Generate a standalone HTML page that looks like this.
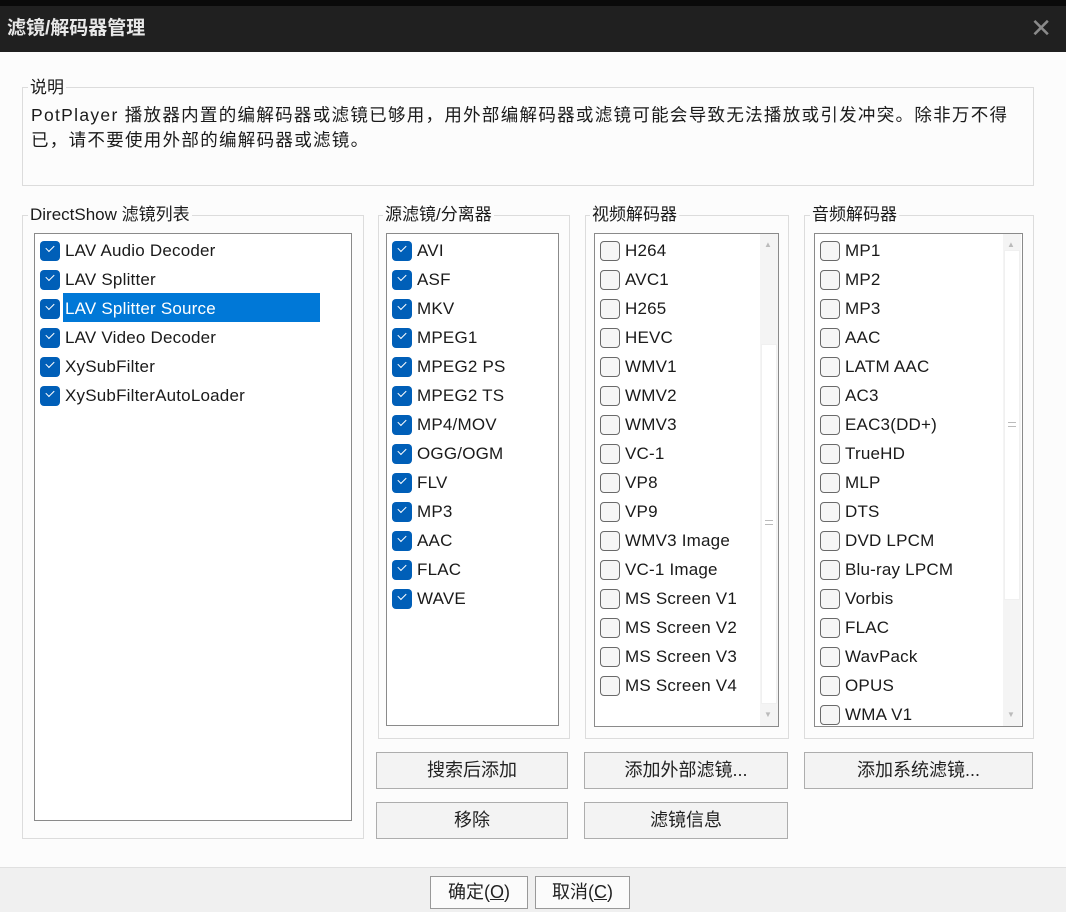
<!DOCTYPE html>
<html><head><meta charset="utf-8"><style>
*{box-sizing:border-box;margin:0;padding:0}
body{width:1066px;height:912px;background:#fcfcfc;font-family:"Liberation Sans","Noto Sans CJK SC",sans-serif;color:#1a1a1a;position:relative;overflow:hidden}
.a{position:absolute}
#top{left:0;top:0;width:1066px;height:6px;background:#0a0a0a}
#tb{left:0;top:6px;width:1066px;height:46px;background:#202020;color:#e8e8e8;font-size:19px;font-weight:bold;line-height:46px;padding-left:7px}
#x{right:14px;top:2px;color:#8a8a8a;font-size:26px;line-height:40px;font-weight:normal}
.grp{position:absolute;border:1px solid #dcdcdc}
.lbl{position:absolute;background:#fcfcfc;font-size:17px;padding:0 2px;line-height:20px}
.lb{position:absolute;border:1px solid #8a8a8a;background:#fff}
.it{position:absolute;height:29px;font-size:17px;line-height:29px;white-space:nowrap;letter-spacing:0.2px}
.cb{position:absolute;width:20px;height:20px;border-radius:4px;top:5px}
.on{background:#005fb8}
.on::after{content:"";position:absolute;left:6px;top:4px;width:7px;height:4px;border-left:1.5px solid #fff;border-bottom:1.5px solid #fff;transform:rotate(-45deg)}
.off{border:1px solid #6a6a6a;background:#f6f6f6}
.sb{position:absolute;background:#f4f4f4;width:18px}
.th{position:absolute;left:1px;width:16px;background:#fff;border:1px solid #e4e4e4}
.btn{position:absolute;height:37px;border:1px solid #adadad;background:#f3f3f3;font-size:18px;text-align:center;line-height:35px;color:#222}
</style></head><body>
<div id="top" class="a"></div>
<div id="tb" class="a">滤镜/解码器管理<span id="x" class="a">✕</span></div>

<div class="grp" style="left:22px;top:87px;width:1012px;height:99px"></div>
<div class="lbl" style="left:28px;top:78px">说明</div>
<div class="a" style="left:31px;top:103px;width:1000px;font-size:17.5px;line-height:25px;white-space:nowrap;letter-spacing:1.3px">PotPlayer 播放器内置的编解码器或滤镜已够用，用外部编解码器或滤镜可能会导致无法播放或引发冲突。除非万不得<br>已，请不要使用外部的编解码器或滤镜。</div>

<div class="grp" style="left:22px;top:215px;width:342px;height:624px"></div>
<div class="lbl" style="left:28px;top:205px">DirectShow 滤镜列表</div>
<div class="lb" style="left:34px;top:233px;width:318px;height:588px"></div>
<div class="a" style="left:63px;top:293px;width:257px;height:29px;background:#0078d7"></div>
<div class="it" style="left:40px;top:236px"><span class="cb on"></span><span style="margin-left:25px">LAV Audio Decoder</span></div>
<div class="it" style="left:40px;top:265px"><span class="cb on"></span><span style="margin-left:25px">LAV Splitter</span></div>
<div class="it" style="left:40px;top:294px;color:#fff"><span class="cb on"></span><span style="margin-left:25px">LAV Splitter Source</span></div>
<div class="it" style="left:40px;top:323px"><span class="cb on"></span><span style="margin-left:25px">LAV Video Decoder</span></div>
<div class="it" style="left:40px;top:352px"><span class="cb on"></span><span style="margin-left:25px">XySubFilter</span></div>
<div class="it" style="left:40px;top:381px"><span class="cb on"></span><span style="margin-left:25px">XySubFilterAutoLoader</span></div>

<div class="grp" style="left:378px;top:215px;width:192px;height:524px"></div>
<div class="lbl" style="left:383px;top:205px">源滤镜/分离器</div>
<div class="lb" style="left:386px;top:233px;width:173px;height:493px"></div>
<div class="it" style="left:392px;top:236px"><span class="cb on"></span><span style="margin-left:25px">AVI</span></div>
<div class="it" style="left:392px;top:265px"><span class="cb on"></span><span style="margin-left:25px">ASF</span></div>
<div class="it" style="left:392px;top:294px"><span class="cb on"></span><span style="margin-left:25px">MKV</span></div>
<div class="it" style="left:392px;top:323px"><span class="cb on"></span><span style="margin-left:25px">MPEG1</span></div>
<div class="it" style="left:392px;top:352px"><span class="cb on"></span><span style="margin-left:25px">MPEG2 PS</span></div>
<div class="it" style="left:392px;top:381px"><span class="cb on"></span><span style="margin-left:25px">MPEG2 TS</span></div>
<div class="it" style="left:392px;top:410px"><span class="cb on"></span><span style="margin-left:25px">MP4/MOV</span></div>
<div class="it" style="left:392px;top:439px"><span class="cb on"></span><span style="margin-left:25px">OGG/OGM</span></div>
<div class="it" style="left:392px;top:468px"><span class="cb on"></span><span style="margin-left:25px">FLV</span></div>
<div class="it" style="left:392px;top:497px"><span class="cb on"></span><span style="margin-left:25px">MP3</span></div>
<div class="it" style="left:392px;top:526px"><span class="cb on"></span><span style="margin-left:25px">AAC</span></div>
<div class="it" style="left:392px;top:555px"><span class="cb on"></span><span style="margin-left:25px">FLAC</span></div>
<div class="it" style="left:392px;top:584px"><span class="cb on"></span><span style="margin-left:25px">WAVE</span></div>

<div class="grp" style="left:585px;top:215px;width:204px;height:524px"></div>
<div class="lbl" style="left:590px;top:205px">视频解码器</div>
<div class="lb" style="left:594px;top:233px;width:185px;height:494px"></div>
<div class="sb" style="left:760px;top:234px;height:492px"><div class="th" style="top:110px;height:360px;border-color:#f0f0f0"></div><div class="a" style="left:4px;top:6px;font-size:8px;color:#bbb">▲</div><div class="a" style="left:4px;top:476px;font-size:8px;color:#bbb">▼</div><div class="a" style="left:5px;top:286px;width:8px;height:5px;border-top:1px solid #bbb;border-bottom:1px solid #bbb"></div></div>
<div class="it" style="left:600px;top:236px"><span class="cb off"></span><span style="margin-left:25px">H264</span></div>
<div class="it" style="left:600px;top:265px"><span class="cb off"></span><span style="margin-left:25px">AVC1</span></div>
<div class="it" style="left:600px;top:294px"><span class="cb off"></span><span style="margin-left:25px">H265</span></div>
<div class="it" style="left:600px;top:323px"><span class="cb off"></span><span style="margin-left:25px">HEVC</span></div>
<div class="it" style="left:600px;top:352px"><span class="cb off"></span><span style="margin-left:25px">WMV1</span></div>
<div class="it" style="left:600px;top:381px"><span class="cb off"></span><span style="margin-left:25px">WMV2</span></div>
<div class="it" style="left:600px;top:410px"><span class="cb off"></span><span style="margin-left:25px">WMV3</span></div>
<div class="it" style="left:600px;top:439px"><span class="cb off"></span><span style="margin-left:25px">VC-1</span></div>
<div class="it" style="left:600px;top:468px"><span class="cb off"></span><span style="margin-left:25px">VP8</span></div>
<div class="it" style="left:600px;top:497px"><span class="cb off"></span><span style="margin-left:25px">VP9</span></div>
<div class="it" style="left:600px;top:526px"><span class="cb off"></span><span style="margin-left:25px">WMV3 Image</span></div>
<div class="it" style="left:600px;top:555px"><span class="cb off"></span><span style="margin-left:25px">VC-1 Image</span></div>
<div class="it" style="left:600px;top:584px"><span class="cb off"></span><span style="margin-left:25px">MS Screen V1</span></div>
<div class="it" style="left:600px;top:613px"><span class="cb off"></span><span style="margin-left:25px">MS Screen V2</span></div>
<div class="it" style="left:600px;top:642px"><span class="cb off"></span><span style="margin-left:25px">MS Screen V3</span></div>
<div class="it" style="left:600px;top:671px"><span class="cb off"></span><span style="margin-left:25px">MS Screen V4</span></div>

<div class="grp" style="left:804px;top:215px;width:230px;height:524px"></div>
<div class="lbl" style="left:810px;top:205px">音频解码器</div>
<div class="lb" style="left:814px;top:233px;width:209px;height:494px"></div>
<div class="sb" style="left:1003px;top:234px;height:492px"><div class="th" style="top:16px;height:350px;border-color:#f0f0f0"></div><div class="a" style="left:4px;top:6px;font-size:8px;color:#bbb">▲</div><div class="a" style="left:4px;top:476px;font-size:8px;color:#bbb">▼</div><div class="a" style="left:5px;top:188px;width:8px;height:5px;border-top:1px solid #bbb;border-bottom:1px solid #bbb"></div></div>
<div class="it" style="left:820px;top:236px"><span class="cb off"></span><span style="margin-left:25px">MP1</span></div>
<div class="it" style="left:820px;top:265px"><span class="cb off"></span><span style="margin-left:25px">MP2</span></div>
<div class="it" style="left:820px;top:294px"><span class="cb off"></span><span style="margin-left:25px">MP3</span></div>
<div class="it" style="left:820px;top:323px"><span class="cb off"></span><span style="margin-left:25px">AAC</span></div>
<div class="it" style="left:820px;top:352px"><span class="cb off"></span><span style="margin-left:25px">LATM AAC</span></div>
<div class="it" style="left:820px;top:381px"><span class="cb off"></span><span style="margin-left:25px">AC3</span></div>
<div class="it" style="left:820px;top:410px"><span class="cb off"></span><span style="margin-left:25px">EAC3(DD+)</span></div>
<div class="it" style="left:820px;top:439px"><span class="cb off"></span><span style="margin-left:25px">TrueHD</span></div>
<div class="it" style="left:820px;top:468px"><span class="cb off"></span><span style="margin-left:25px">MLP</span></div>
<div class="it" style="left:820px;top:497px"><span class="cb off"></span><span style="margin-left:25px">DTS</span></div>
<div class="it" style="left:820px;top:526px"><span class="cb off"></span><span style="margin-left:25px">DVD LPCM</span></div>
<div class="it" style="left:820px;top:555px"><span class="cb off"></span><span style="margin-left:25px">Blu-ray LPCM</span></div>
<div class="it" style="left:820px;top:584px"><span class="cb off"></span><span style="margin-left:25px">Vorbis</span></div>
<div class="it" style="left:820px;top:613px"><span class="cb off"></span><span style="margin-left:25px">FLAC</span></div>
<div class="it" style="left:820px;top:642px"><span class="cb off"></span><span style="margin-left:25px">WavPack</span></div>
<div class="it" style="left:820px;top:671px"><span class="cb off"></span><span style="margin-left:25px">OPUS</span></div>
<div class="it" style="left:820px;top:700px"><span class="cb off"></span><span style="margin-left:25px">WMA V1</span></div>

<div class="btn" style="left:376px;top:752px;width:192px">搜索后添加</div>
<div class="btn" style="left:584px;top:752px;width:204px">添加外部滤镜...</div>
<div class="btn" style="left:804px;top:752px;width:229px">添加系统滤镜...</div>
<div class="btn" style="left:376px;top:802px;width:192px">移除</div>
<div class="btn" style="left:584px;top:802px;width:204px">滤镜信息</div>

<div class="a" style="left:0;top:867px;width:1066px;height:45px;background:#f0f0f0;border-top:1px solid #e0e0e0"></div>
<div class="btn" style="left:430px;top:876px;width:98px;height:33px;line-height:31px;background:#fbfbfb;border-color:#999">确定(<u>O</u>)</div>
<div class="btn" style="left:535px;top:876px;width:95px;height:33px;line-height:31px;background:#fbfbfb;border-color:#999">取消(<u>C</u>)</div>
</body></html>
